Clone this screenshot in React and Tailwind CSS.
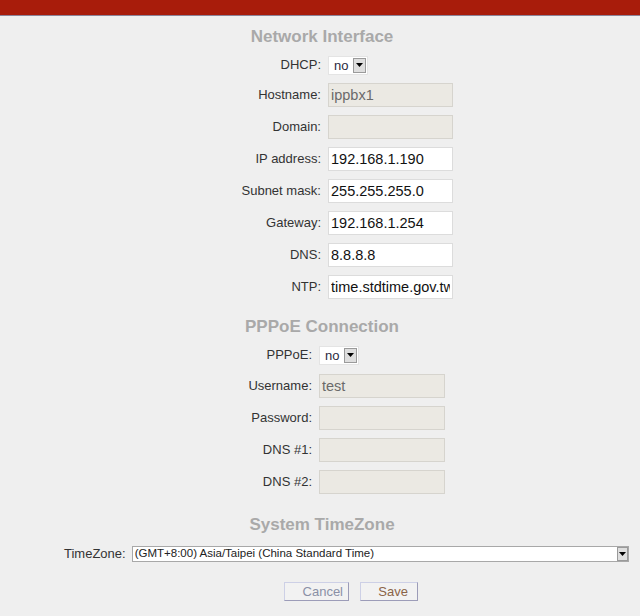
import { useState } from 'react'

const networkRows = [
  { label: 'Hostname:', value: 'ippbx1', disabled: true },
  { label: 'Domain:', value: '', disabled: true },
  { label: 'IP address:', value: '192.168.1.190' },
  { label: 'Subnet mask:', value: '255.255.255.0' },
  { label: 'Gateway:', value: '192.168.1.254' },
  { label: 'DNS:', value: '8.8.8.8' },
  { label: 'NTP:', value: 'time.stdtime.gov.tw' },
]

const pppoeRows = [
  { label: 'Username:', value: 'test' },
  { label: 'Password:', value: '' },
  { label: 'DNS #1:', value: '' },
  { label: 'DNS #2:', value: '' },
]

function Arrow() {
  return (
    <svg width="7" height="4" viewBox="0 0 7 4">
      <path d="M0 0h7L3.5 4z" fill="#000" />
    </svg>
  )
}

function SmallSelect({ value }) {
  return (
    <div className="flex items-center h-[19px] w-[40px] bg-white border border-[#e4e4e4] pl-[5px] pr-[1px]">
      <span className="flex-1 text-[13px] leading-none text-[#2a2a40]">{value}</span>
      <span className="flex items-center justify-center w-[13px] h-[15px] bg-[#dedede] border border-[#9a9a9a]">
        <Arrow />
      </span>
    </div>
  )
}

function Field({ value, disabled, width }) {
  return (
    <input
      readOnly
      value={value}
      className={`h-[24px] ${width} border px-[2px] text-[14.5px] outline-none ${
        disabled ? 'bg-[#ebe9e3] border-[#d6d4ce] text-[#6a6a6a]' : 'bg-white border-[#dcdcdc] text-[#111]'
      }`}
    />
  )
}

function SectionTitle({ children }) {
  return (
    <h2 className="h-[20px] pl-[4px] text-center text-[17px] leading-[20px] font-bold text-[#a9a9a9]">
      {children}
    </h2>
  )
}

export default function App() {
  const [timezone] = useState('(GMT+8:00) Asia/Taipei (China Standard Time)')

  return (
    <div
      className="min-h-[616px] bg-[#efefef] text-[#333]"
      style={{ fontFamily: '"Liberation Sans", Arial, sans-serif' }}
    >
      <div className="h-[16px] bg-[#a81c0b] border-b border-[#8c8398]" />

      <div className="mt-[11px]">
        <SectionTitle>Network Interface</SectionTitle>
      </div>
      <div className="pt-[4px]">
        <div className="flex items-center h-[28px]">
          <div className="w-[321px] text-right text-[13px]">DHCP:</div>
          <div className="ml-[7px]">
            <SmallSelect value="no" />
          </div>
        </div>
        {networkRows.map((r) => (
          <div key={r.label} className="flex items-center h-[32px]">
            <div className="w-[321px] text-right text-[13px]">{r.label}</div>
            <div className="ml-[7px] flex">
              <Field value={r.value} disabled={r.disabled} width="w-[125px]" />
            </div>
          </div>
        ))}
      </div>

      <div className="mt-[14px]">
        <SectionTitle>PPPoE Connection</SectionTitle>
      </div>
      <div className="pt-[3px]">
        <div className="flex items-center h-[30px]">
          <div className="w-[312px] text-right text-[13px]">PPPoE:</div>
          <div className="ml-[7px]">
            <SmallSelect value="no" />
          </div>
        </div>
        {pppoeRows.map((r) => (
          <div key={r.label} className="flex items-center h-[32px]">
            <div className="w-[312px] text-right text-[13px]">{r.label}</div>
            <div className="ml-[7px] flex">
              <Field value={r.value} disabled width="w-[126px]" />
            </div>
          </div>
        ))}
      </div>

      <div className="mt-[17px]">
        <SectionTitle>System TimeZone</SectionTitle>
      </div>
      <div className="flex items-center h-[20px] mt-[9px] pl-[64px]">
        <span className="text-[13px]">TimeZone:</span>
        <div className="ml-[6px] flex items-center w-[497px] h-[16px] bg-white border border-[#a8a8a8] pl-[2px]">
          <span className="flex-1 text-[11.5px] leading-none text-[#222]">{timezone}</span>
          <span className="flex items-center justify-center w-[11px] h-[14px] bg-[#dedede] border border-[#9a9a9a]">
            <Arrow />
          </span>
        </div>
      </div>

      <div className="flex mt-[18px] pl-[284px] gap-[11px]">
        <button className="flex items-center justify-end w-[65px] h-[19px] pr-[5px] text-[13px] leading-none text-[#8a90a6] bg-[#f2f2f2] border border-[#cdd0e6] border-r-[#9c9cb8] border-b-[#9c9cb8]">
          Cancel
        </button>
        <button className="flex items-center justify-end w-[58px] h-[19px] pr-[9px] text-[13px] leading-none text-[#8a6448] bg-[#f2f2f2] border border-[#cdd0e6] border-r-[#9c9cb8] border-b-[#9c9cb8]">
          Save
        </button>
      </div>
    </div>
  )
}
